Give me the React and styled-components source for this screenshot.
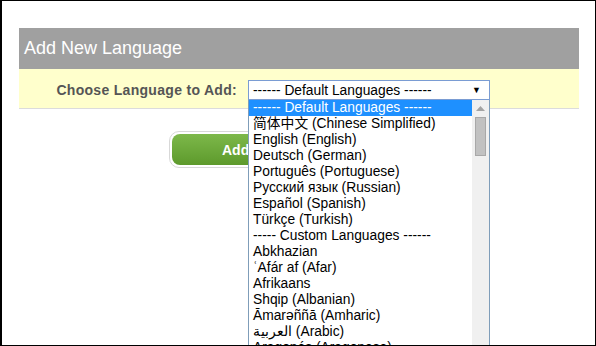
import styled, { createGlobalStyle } from "styled-components";

const GlobalStyle = createGlobalStyle`
  html, body {
    margin: 0;
    padding: 0;
    background: #fff;
    overflow: hidden;
  }
  body {
    font-family: "Liberation Sans", Arial, "Noto Sans CJK SC", sans-serif;
  }
`;

const Page = styled.div`
  box-sizing: border-box;
  width: 596px;
  height: 346px;
  border: 1px solid #000;
  border-left-width: 2px;
  padding: 27px 16px 0 17px;
  overflow: hidden;
`;

const Panel = styled.div`
  display: flex;
  flex-direction: column;
`;

const Header = styled.div`
  height: 41px;
  background: #a0a0a0;
  color: #fff;
  font-size: 18px;
  line-height: 41px;
  padding-left: 5px;
`;

const FieldRow = styled.div`
  display: flex;
  align-items: flex-start;
  gap: 11px;
  height: 40px;
  box-sizing: border-box;
  padding-top: 11px;
  background: #ffffcc;
  border-bottom: 1px solid #dcdcdc;
`;

const Label = styled.label`
  width: 218px;
  text-align: right;
  font-size: 14px;
  font-weight: bold;
  letter-spacing: 0.3px;
  color: #555;
  line-height: 20px;
`;

const SelectWrap = styled.div`
  position: relative;
  width: 242px;
`;

const SelectBox = styled.div`
  box-sizing: border-box;
  height: 20px;
  border: 1px solid #7a9cd3;
  background: #fff;
  display: flex;
  align-items: center;
  justify-content: space-between;
  padding: 0 8px 0 4px;
  font-size: 13.8px;
  color: #000;
  white-space: nowrap;
`;

const Arrow = styled.span`
  font-size: 9px;
  color: #000;
`;

const ListBox = styled.div`
  position: absolute;
  top: 20px;
  left: 0;
  width: 242px;
  height: 260px;
  box-sizing: border-box;
  border: 1px solid #7f9db9;
  border-top: none;
  background: #fff;
  display: flex;
  z-index: 2;
`;

const Options = styled.div`
  flex: 1;
  display: flex;
  flex-direction: column;
`;

const Option = styled.div`
  height: 16px;
  line-height: 16px;
  padding-left: 4px;
  font-size: 13.8px;
  white-space: nowrap;
  color: ${(p) => (p.$selected ? "#fff" : "#000")};
  background: ${(p) => (p.$selected ? "#1e90ff" : "transparent")};
`;

const Scrollbar = styled.div`
  width: 17px;
  background: #f0f0f0;
  display: flex;
  flex-direction: column;
  align-items: center;
`;

const ScrollUp = styled.div`
  height: 17px;
  display: flex;
  align-items: center;
  justify-content: center;
`;

const Thumb = styled.div`
  width: 11px;
  height: 39px;
  box-sizing: border-box;
  background: #c1c1c1;
  border: 1px solid #a8a8a8;
`;

const Body = styled.div`
  padding: 22px 0 0 150px;
`;

const ButtonRing = styled.div`
  display: inline-block;
  padding: 2px;
  border: 1px solid #d8d8d8;
  border-radius: 10px;
  background: #fff;
`;

const Button = styled.button`
  width: 196px;
  height: 31px;
  border: none;
  border-radius: 8px;
  background: linear-gradient(#7db84a, #5d9a2c);
  color: #fff;
  font-family: "Liberation Sans", Arial, sans-serif;
  font-size: 14px;
  font-weight: bold;
  padding: 0;
  text-align: left;
  padding-left: 50px;
`;

const options = [
  "------ Default Languages ------",
  "简体中文 (Chinese Simplified)",
  "English (English)",
  "Deutsch (German)",
  "Português (Portuguese)",
  "Русский язык (Russian)",
  "Español (Spanish)",
  "Türkçe (Turkish)",
  "----- Custom Languages ------",
  "Abkhazian",
  "ʿAfár af (Afar)",
  "Afrikaans",
  "Shqip (Albanian)",
  "Āmarəññā (Amharic)",
  "العربية (Arabic)",
  "Aragonés (Aragonese)",
];

export default function App() {
  return (
    <>
      <GlobalStyle />
      <Page>
        <Panel>
          <Header>Add New Language</Header>
          <FieldRow>
            <Label>Choose Language to Add:</Label>
            <SelectWrap>
              <SelectBox>
                <span>------ Default Languages ------</span>
                <Arrow>▼</Arrow>
              </SelectBox>
              <ListBox>
                <Options>
                  {options.map((o, i) => (
                    <Option key={o} $selected={i === 0}>
                      {o}
                    </Option>
                  ))}
                </Options>
                <Scrollbar>
                  <ScrollUp>
                    <svg width="9" height="5" viewBox="0 0 9 5">
                      <path d="M0 5 L4.5 0 L9 5 Z" fill="#a3a3a3" />
                    </svg>
                  </ScrollUp>
                  <Thumb />
                </Scrollbar>
              </ListBox>
            </SelectWrap>
          </FieldRow>
          <Body>
            <ButtonRing>
              <Button>Add Language</Button>
            </ButtonRing>
          </Body>
        </Panel>
      </Page>
    </>
  );
}
